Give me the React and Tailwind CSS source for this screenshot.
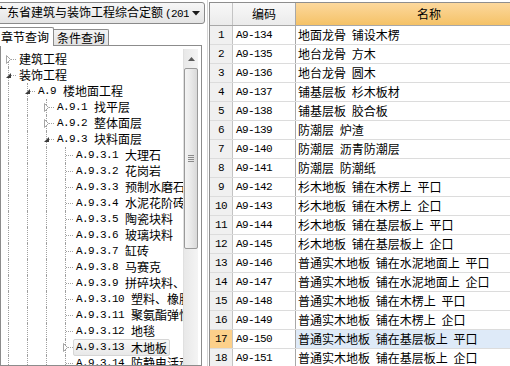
import React from "react";

const mono = "[font-family:'Liberation_Mono',monospace] text-[11px] tracking-[-0.6px]";
const cjk = "[font-family:'Noto_Sans_CJK_SC','Noto_Sans',sans-serif] text-[12px]";

function Collapsed() {
  return (
    <svg width="9" height="9" viewBox="0 0 9 9">
      <path d="M2.5 0.5 L6.5 4.5 L2.5 8.5 Z" fill="#fff" stroke="#a6a6a6" />
    </svg>
  );
}
function Expanded() {
  return (
    <svg width="9" height="9" viewBox="0 0 9 9">
      <path d="M7 2 L7 7 L2 7 Z" fill="#3c3c3c" />
    </svg>
  );
}

const tree = [
  { lvl: 0, name: "建筑工程", exp: "c", first: true },
  { lvl: 0, name: "装饰工程", exp: "e" },
  { lvl: 1, code: "A.9", name: "楼地面工程", exp: "e" },
  { lvl: 2, code: "A.9.1", name: "找平层", exp: "c" },
  { lvl: 2, code: "A.9.2", name: "整体面层", exp: "c" },
  { lvl: 2, code: "A.9.3", name: "块料面层", exp: "e" },
  { lvl: 3, code: "A.9.3.1", name: "大理石" },
  { lvl: 3, code: "A.9.3.2", name: "花岗岩" },
  { lvl: 3, code: "A.9.3.3", name: "预制水磨石" },
  { lvl: 3, code: "A.9.3.4", name: "水泥花阶砖" },
  { lvl: 3, code: "A.9.3.5", name: "陶瓷块料" },
  { lvl: 3, code: "A.9.3.6", name: "玻璃块料" },
  { lvl: 3, code: "A.9.3.7", name: "缸砖" },
  { lvl: 3, code: "A.9.3.8", name: "马赛克" },
  { lvl: 3, code: "A.9.3.9", name: "拼碎块料、碎石板" },
  { lvl: 3, code: "A.9.3.10", name: "塑料、橡胶板" },
  { lvl: 3, code: "A.9.3.11", name: "聚氨酯弹性地面" },
  { lvl: 3, code: "A.9.3.12", name: "地毯" },
  { lvl: 3, code: "A.9.3.13", name: "木地板", exp: "c", sel: true },
  { lvl: 3, code: "A.9.3.14", name: "防静电活动地板" },
];

const rows = [
  ["A9-134", "地面龙骨 铺设木楞"],
  ["A9-135", "地台龙骨 方木"],
  ["A9-136", "地台龙骨 圆木"],
  ["A9-137", "铺基层板 杉木板材"],
  ["A9-138", "铺基层板 胶合板"],
  ["A9-139", "防潮层 炉渣"],
  ["A9-140", "防潮层 沥青防潮层"],
  ["A9-141", "防潮层 防潮纸"],
  ["A9-142", "杉木地板 铺在木楞上 平口"],
  ["A9-143", "杉木地板 铺在木楞上 企口"],
  ["A9-144", "杉木地板 铺在基层板上 平口"],
  ["A9-145", "杉木地板 铺在基层板上 企口"],
  ["A9-146", "普通实木地板 铺在水泥地面上 平口"],
  ["A9-147", "普通实木地板 铺在水泥地面上 企口"],
  ["A9-148", "普通实木地板 铺在木楞上 平口"],
  ["A9-149", "普通实木地板 铺在木楞上 企口"],
  ["A9-150", "普通实木地板 铺在基层板上 平口"],
  ["A9-151", "普通实木地板 铺在基层板上 企口"],
];

function TreeRow({ it }) {
  const guides = [];
  for (let k = 0; k < it.lvl; k++) {
    guides.push(
      <div key={k} className="w-[19px] shrink-0 h-full pl-[8px]">
        <div className="h-full border-l border-dotted border-[#a0a0a0]" />
      </div>
    );
  }
  return (
    <div className="flex h-[16px] items-stretch whitespace-nowrap">
      {guides}
      <div className="relative w-[16px] shrink-0 h-full">
        <div
          className={`absolute left-[8px] w-0 border-l border-dotted border-[#a0a0a0] ${
            it.first ? "top-[8px] bottom-0" : "top-0 bottom-0"
          }`}
        />
        <div className="absolute left-[9px] right-0 top-[8px] border-t border-dotted border-[#a0a0a0]" />
        {it.exp && (
          <div className="absolute left-[4px] top-[4px] w-[9px] h-[9px] flex">
            {it.exp === "c" ? <Collapsed /> : <Expanded />}
          </div>
        )}
      </div>
      <div
        className={`flex items-center px-[2px] border rounded-[2px] ${
          it.sel
            ? "border-[#d6d6d6] bg-gradient-to-b from-[#f8f8f8] to-[#e8e8e8] -mb-[1px]"
            : "border-transparent"
        }`}
      >
        {it.code && <span className={`${mono} text-black`}>{it.code}</span>}
        <span className={`${cjk} text-black leading-[14px] ${it.code ? "ml-[7px]" : ""}`}>{it.name}</span>
      </div>
    </div>
  );
}

export default function App() {
  return (
    <div className="w-[510px] h-[366px] overflow-hidden bg-white flex select-none">
      {/* Left panel */}
      <div className="w-[206px] shrink-0 flex flex-col h-full">
        <div className="mt-[2px] h-[22px] -ml-[4px] mr-[1px] flex items-center border border-[#8a8a8a] rounded-[3px] bg-gradient-to-b from-[#f7f7f7] to-[#e4e4e4] overflow-hidden">
          <div className={`flex-1 overflow-hidden whitespace-nowrap -ml-[2px] ${cjk} text-black leading-[16px]`}>
            广东省建筑与装饰工程综合定额<span className={`ml-[2px] ${mono}`}>(2018)</span>
          </div>
          <div className="w-[14px] shrink-0 mr-[1px] flex items-center justify-center">
            <svg width="8" height="5" viewBox="0 0 8 5">
              <path d="M0 0 H8 L4 4.5 Z" fill="#1a1a1a" />
            </svg>
          </div>
        </div>
        <div className="h-[21px] flex items-end shrink-0 relative z-10">
          <div className={`-ml-[4px] h-[19px] w-[58px] bg-white border border-b-0 border-[#8c8c8c] rounded-t-[2px] flex items-center justify-center ${cjk} text-black -mb-[1px]`}>
            章节查询
          </div>
          <div className={`h-[16px] w-[55px] border border-b-0 border-l-0 border-[#8c8c8c] rounded-tr-[2px] bg-gradient-to-b from-[#f4f4f4] to-[#e2e2e2] flex items-center justify-center ${cjk} text-black`}>
            条件查询
          </div>
        </div>
        <div className="flex-1 min-h-0 w-[202px] border border-[#8c8c8c] bg-white flex">
          <div className="w-[183px] shrink-0 overflow-hidden pt-[5px] -ml-[1px]">
            {tree.map((it, i) => (
              <TreeRow key={i} it={it} />
            ))}
          </div>
          <div className="w-[15px] shrink-0 mt-[3px] flex flex-col bg-gradient-to-r from-[#e8e8e8] to-[#f4f4f4] border-l border-[#e0e0e0]">
            <div className="h-[19px] flex items-center justify-center">
              <svg width="7" height="4" viewBox="0 0 7 4">
                <path d="M0 4 L3.5 0 L7 4 Z" fill="#5a5a5a" />
              </svg>
            </div>
            <div className="h-[181px] border border-[#9a9a9a] rounded-[2px] bg-gradient-to-r from-[#f4f4f4] via-[#e9e9e9] to-[#d9d9d9] flex items-center justify-center">
              <div className="flex flex-col gap-[1px]">
                <div className="w-[6px] h-[1px] bg-[#8a8a8a]" />
                <div className="w-[6px] h-[1px] bg-[#8a8a8a]" />
                <div className="w-[6px] h-[1px] bg-[#8a8a8a]" />
                <div className="w-[6px] h-[1px] bg-[#8a8a8a]" />
              </div>
            </div>
          </div>
        </div>
      </div>

      {/* Splitter */}
      <div className="w-[3px] shrink-0 flex justify-center">
        <div className="w-[1px] h-full bg-[#d4d4d4]" />
      </div>

      {/* Grid */}
      <div className="flex-1 min-w-0 pt-[2px] h-full">
        <div className="h-full border-l border-t border-[#8e8e8e] bg-white overflow-hidden">
          <div className="flex h-[23px] border-b border-[#a8a8a8]">
            <div className="w-[23px] shrink-0 border-r border-[#c4c4c4] bg-gradient-to-b from-[#f8f8f8] to-[#ebebeb]" />
            <div className={`w-[63px] shrink-0 border-r border-[#a8a8a8] bg-gradient-to-b from-[#f8f8f8] to-[#ebebeb] flex items-center justify-center ${cjk} text-black`}>
              编码
            </div>
            <div className={`w-[266px] shrink-0 bg-gradient-to-b from-[#fcd89c] to-[#f5c266] flex items-center justify-center ${cjk} text-black`}>
              名称
            </div>
          </div>
          {rows.map((r, i) => {
            const sel = i === 16;
            return (
              <div key={i} className="flex h-[19px] border-b border-[#dcdcdc]">
                <div
                  className={`w-[23px] shrink-0 border-r border-[#c4c4c4] flex items-center justify-center ${mono} text-black ${
                    sel ? "bg-[#fcd08a]" : "bg-[#f0f0f0]"
                  }`}
                >
                  {i + 1}
                </div>
                <div className={`w-[63px] shrink-0 border-r border-[#a8a8a8] flex items-center pl-[3px] ${mono} text-black`}>
                  {r[0]}
                </div>
                <div
                  className={`flex-1 flex items-center pl-[2px] whitespace-nowrap ${cjk} [word-spacing:3px] text-black ${
                    sel ? "bg-[#deeaf8]" : ""
                  }`}
                >
                  {r[1]}
                </div>
              </div>
            );
          })}
        </div>
      </div>
    </div>
  );
}
